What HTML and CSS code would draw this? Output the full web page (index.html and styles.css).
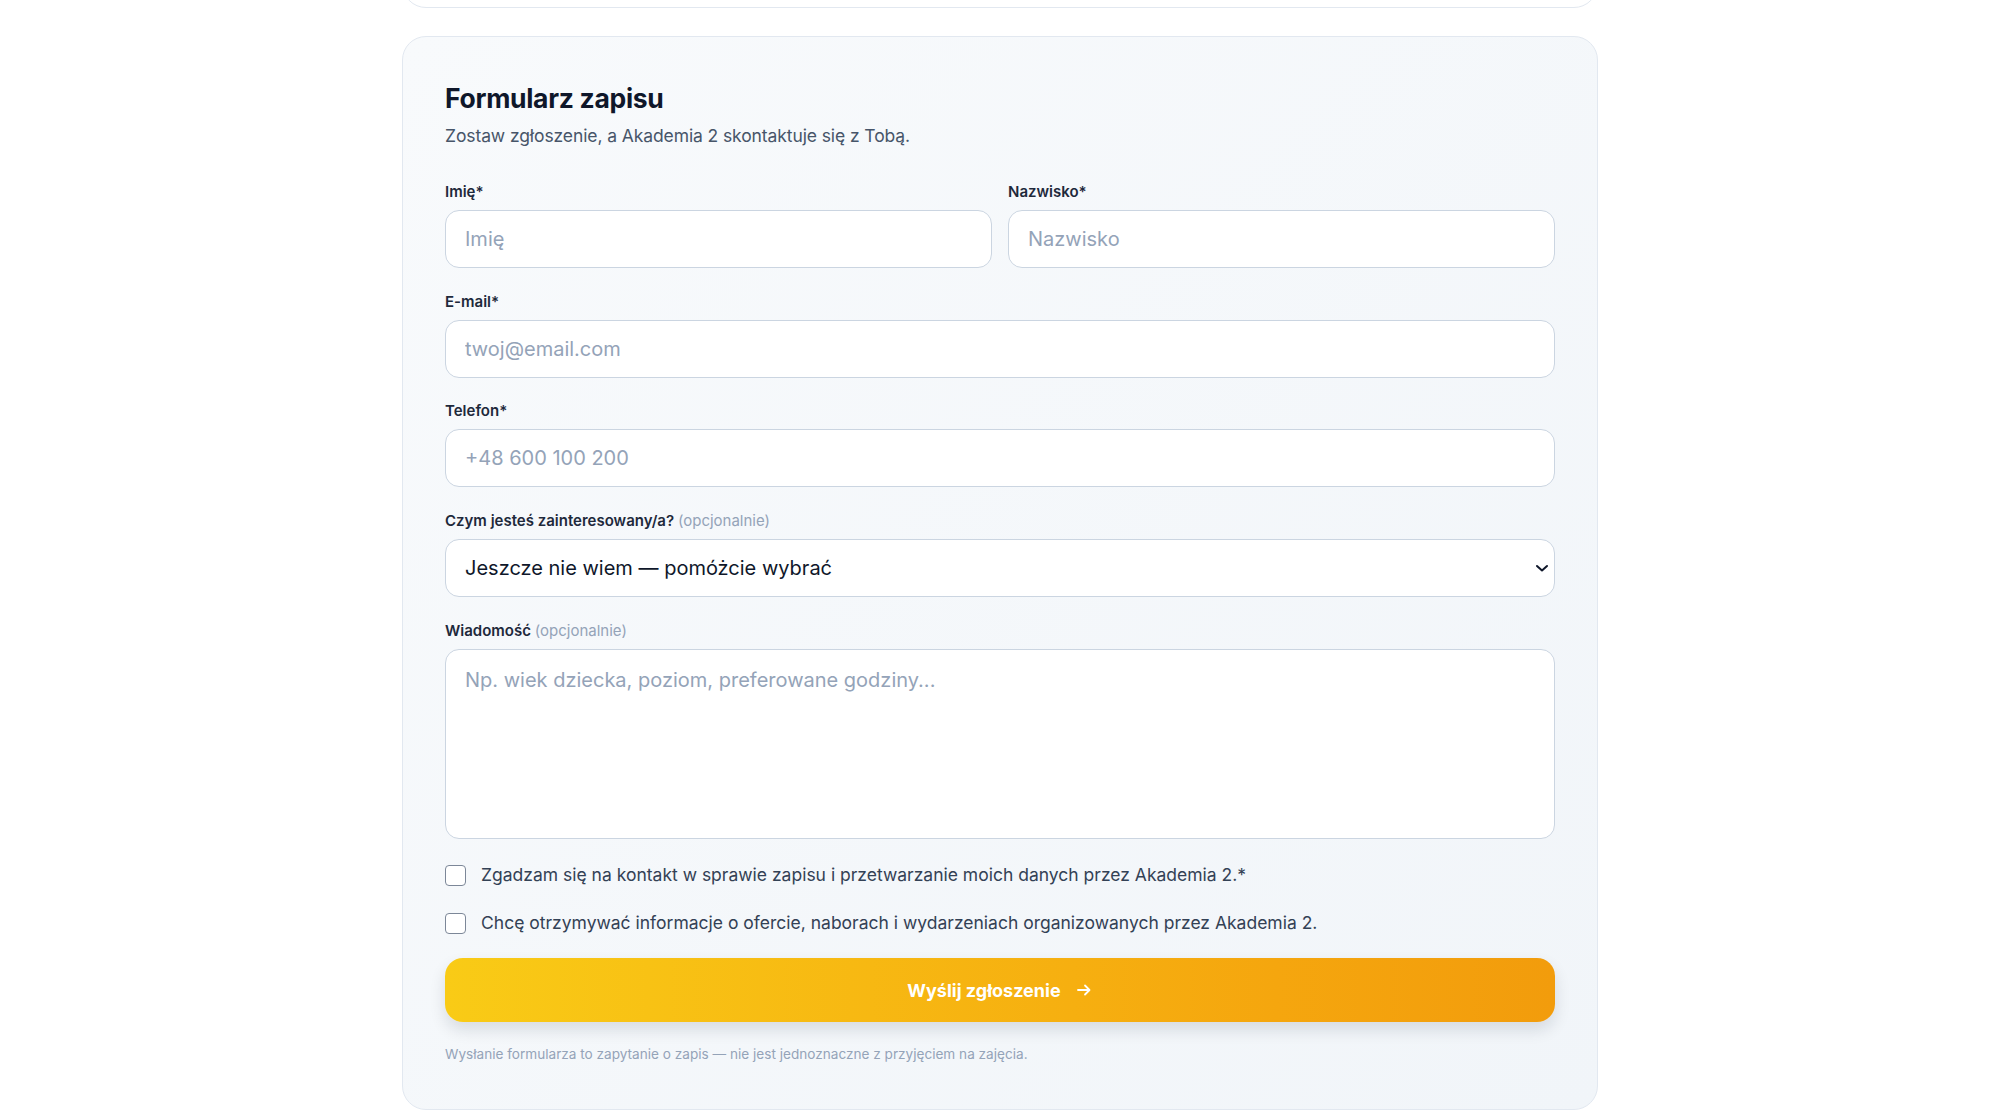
FILE: index.html
```html
<!DOCTYPE html>
<html lang="pl">
<head>
  <meta charset="UTF-8" />
  <meta name="viewport" content="width=device-width, initial-scale=1.0" />
  <title>Formularz zapisu</title>
  <link rel="stylesheet" href="styles.css">
</head>
<body>

  <main class="page">
    <div class="prev-card"></div>

    <section class="signup">
      <h2 class="signup__title">Formularz zapisu</h2>
      <p class="signup__lead">Zostaw zgłoszenie, a Akademia 2 skontaktuje się z Tobą.</p>

      <form class="form">
        <div class="form__row">
          <label class="field">
            <span class="field__label">Imię*</span>
            <input type="text" class="field__input" placeholder="Imię" />
          </label>
          <label class="field">
            <span class="field__label">Nazwisko*</span>
            <input type="text" class="field__input" placeholder="Nazwisko" />
          </label>
        </div>

        <label class="field">
          <span class="field__label">E-mail*</span>
          <input type="email" class="field__input" placeholder="twoj@email.com" />
        </label>

        <label class="field">
          <span class="field__label">Telefon*</span>
          <input type="tel" class="field__input" placeholder="+48 600 100 200" />
        </label>

        <label class="field">
          <span class="field__label">Czym jesteś zainteresowany/a? <span class="field__optional">(opcjonalnie)</span></span>
          <span class="select">
            <select class="field__input field__select">
              <option>Jeszcze nie wiem — pomóżcie wybrać</option>
              <option>Zajęcia dla dzieci</option>
              <option>Zajęcia dla dorosłych</option>
            </select>
            <svg class="select__arrow" width="14" height="14" viewBox="0 0 14 14" fill="none">
              <path d="M2 5l5 4.5L12 5" stroke="#0f172a" stroke-width="2" stroke-linecap="round" stroke-linejoin="round"/>
            </svg>
          </span>
        </label>

        <label class="field">
          <span class="field__label">Wiadomość <span class="field__optional">(opcjonalnie)</span></span>
          <textarea class="field__input field__textarea" placeholder="Np. wiek dziecka, poziom, preferowane godziny..."></textarea>
        </label>

        <div class="consents">
          <label class="check">
            <input type="checkbox" class="check__box" />
            <span>Zgadzam się na kontakt w sprawie zapisu i przetwarzanie moich danych przez Akademia 2.*</span>
          </label>
          <label class="check">
            <input type="checkbox" class="check__box" />
            <span>Chcę otrzymywać informacje o ofercie, naborach i wydarzeniach organizowanych przez Akademia 2.</span>
          </label>
        </div>

        <button type="submit" class="submit">
          Wyślij zgłoszenie
          <svg width="18" height="18" viewBox="0 0 18 18" fill="none">
            <path d="M3 9h11M10 4.5L14.5 9 10 13.5" stroke="#fff" stroke-width="1.8" stroke-linecap="round" stroke-linejoin="round"/>
          </svg>
        </button>

        <p class="form__note">Wysłanie formularza to zapytanie o zapis — nie jest jednoznaczne z przyjęciem na zajęcia.</p>
      </form>
    </section>
  </main>

</body>
</html>
```

FILE: styles.css
```css
* {
  margin: 0;
  padding: 0;
  box-sizing: border-box;
}

body {
  background-color: #fff;
  font-family: "Inter", "Liberation Sans", sans-serif;
  color: #0f172a;
  overflow: hidden;
}

.page {
  width: 1196px;
  margin: 0 auto;
}

.prev-card {
  height: 120px;
  margin-top: -112px;
  border: 1px solid #e2e8f0;
  border-radius: 24px;
  background-color: #fff;
}

.signup {
  margin-top: 28px;
  padding: 43px 42px 45px;
  border: 1px solid #e2e8f0;
  border-radius: 24px;
  background: linear-gradient(135deg, #f8fafc 0%, #f1f5f9 100%);
}

.signup__title {
  font-size: 26.5px;
  line-height: 36px;
  font-weight: 700;
  letter-spacing: -0.3px;
  color: #0f172a;
}

.signup__lead {
  margin-top: 7px;
  font-size: 17.5px;
  line-height: 26px;
  letter-spacing: -0.1px;
  color: #475569;
}

.form {
  margin-top: 31px;
  display: flex;
  flex-direction: column;
  gap: 21.7px;
}

.form__row {
  display: grid;
  grid-template-columns: 1fr 1fr;
  gap: 16px;
}

.field {
  display: flex;
  flex-direction: column;
  gap: 7px;
}

.field__label {
  font-size: 15px;
  line-height: 23px;
  font-weight: 600;
  color: #1e293b;
}

.field__optional {
  font-weight: 400;
  color: #94a3b8;
}

.field__input {
  width: 100%;
  height: 58px;
  padding: 0 19px;
  border: 1px solid #cbd5e1;
  border-radius: 14px;
  background-color: #fff;
  font-family: inherit;
  font-size: 20px;
  color: #0f172a;
  outline: none;
}

.field__input::placeholder {
  color: #94a3b8;
}

.select {
  position: relative;
  display: block;
}

.field__select {
  appearance: none;
  -webkit-appearance: none;
  padding-right: 44px;
}

.select__arrow {
  position: absolute;
  right: 6px;
  top: 22px;
  pointer-events: none;
}

.field__textarea {
  height: 190px;
  padding-top: 16px;
  resize: none;
  line-height: 28px;
}

.consents {
  margin-top: 1px;
  display: flex;
  flex-direction: column;
  gap: 20px;
}

.check {
  display: flex;
  align-items: center;
  gap: 15px;
  font-size: 17.5px;
  line-height: 28px;
  color: #334155;
}

.check__box {
  appearance: none;
  -webkit-appearance: none;
  flex: none;
  width: 21px;
  height: 21px;
  border: 1.5px solid #7c8798;
  border-radius: 4px;
  background-color: #fff;
}

.submit {
  height: 64px;
  margin-top: -1px;
  display: flex;
  align-items: center;
  justify-content: center;
  gap: 14px;
  border: none;
  border-radius: 18px;
  background: linear-gradient(90deg, #f9cb16 0%, #f5a60e 75%, #f29c0c 100%);
  box-shadow: 0 8px 16px rgba(15, 23, 42, 0.12);
  font-family: inherit;
  font-size: 18px;
  font-weight: 700;
  color: #fff;
}

.form__note {
  margin-top: 0;
  font-size: 13.6px;
  line-height: 20px;
  color: #94a3b8;
}
```
